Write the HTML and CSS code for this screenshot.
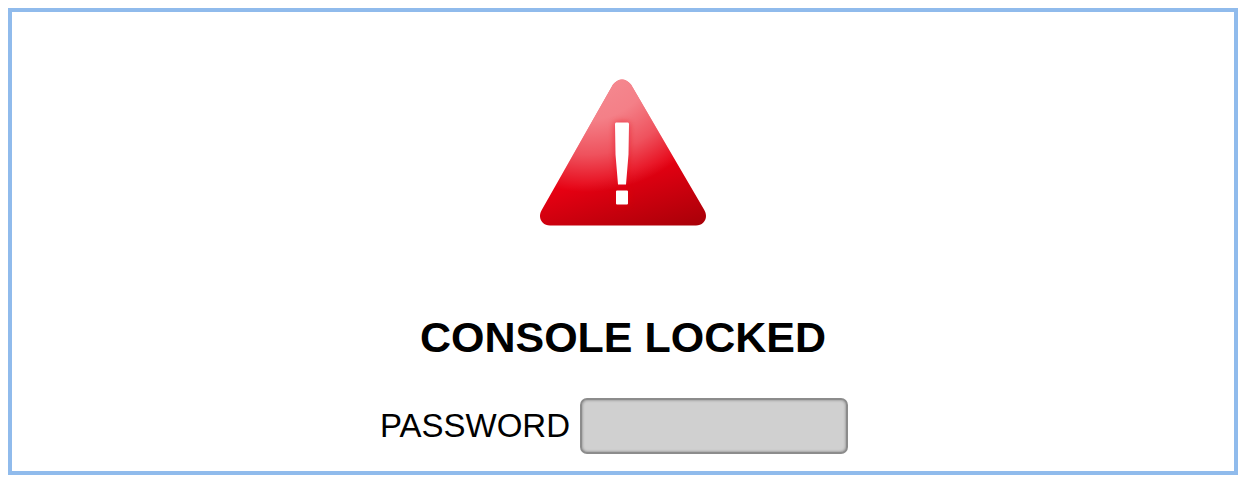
FILE: index.html
```html
<!DOCTYPE html>
<html lang="en">
<head>
<meta charset="utf-8">
<title>Console Locked</title>
<link rel="stylesheet" href="styles.css">
</head>
<body>
<main class="panel">
  <svg class="warning" viewBox="0 0 168 148" role="img" aria-label="Warning">
    <defs>
      <linearGradient id="base" gradientUnits="userSpaceOnUse" x1="84" y1="94" x2="104" y2="164">
        <stop offset="0" stop-color="#e60012"/>
        <stop offset="1" stop-color="#a80008"/>
      </linearGradient>
      <radialGradient id="shine" gradientUnits="userSpaceOnUse" cx="48" cy="-30" r="144">
        <stop offset="0" stop-color="#ffe4e4" stop-opacity=".64"/>
        <stop offset=".5" stop-color="#ffe4e4" stop-opacity=".56"/>
        <stop offset=".74" stop-color="#ffe4e4" stop-opacity=".36"/>
        <stop offset="1" stop-color="#ffe4e4" stop-opacity="0"/>
      </radialGradient>
      <filter id="glow" x="-100%" y="-20%" width="300%" height="140%">
        <feGaussianBlur stdDeviation="3"/>
      </filter>
      <path id="shape" d="M74 6.500Q83-3.500 92 6.500L165 131.500C170 139.500 165 147.500 157 147.500H11C3 147.500-2 139.500 3 131.500Z"/>
      <path id="mark" d="M77 44.500H89Q90 44.500 90 46.500L89.500 76.500L87 106.500H79L76.500 76.500L76 46.500Q76 44.500 77 44.500ZM78 112.500H88Q89 112.500 89 113.500V125.500Q89 126.500 88 126.500H78Q77 126.500 77 125.500V113.500Q77 112.500 78 112.500Z"/>
    </defs>
    <use href="#shape" fill="url(#base)"/>
    <use href="#shape" fill="url(#shine)"/>
    <use href="#mark" fill="#e60012" opacity=".6" filter="url(#glow)"/>
    <use href="#mark" fill="#fff"/>
  </svg>
  <h1 class="title">CONSOLE LOCKED</h1>
  <form class="login">
    <label class="label" for="password">PASSWORD</label>
    <input class="field" id="password" type="password">
  </form>
</main>
</body>
</html>
```
FILE: styles.css
```css
* { box-sizing: border-box; }

body {
  margin: 8px;
  background: #fff;
  color: #000;
  font-family: "Liberation Sans", Arial, sans-serif;
}

.panel {
  display: flex;
  flex-direction: column;
  align-items: center;
  padding: 66px 16px 17px;
  border: 4px solid #90bbec;
  background: #fff;
  box-shadow: 0 0 12px rgba(0, 0, 0, .5);
}

.warning {
  width: 168px;
  height: 148px;
}

.title {
  margin: 86px 0 36px;
  font-size: 43px;
  line-height: 50px;
  font-weight: bold;
}

.login {
  display: flex;
  align-items: center;
  gap: 10px;
  margin-right: 18px;
}

.label {
  font-size: 33px;
  line-height: 40px;
}

.field {
  width: 268px;
  height: 56px;
  padding: 4px 12px;
  border: 2px solid #8c8c8c;
  border-radius: 7px;
  outline: none;
  background: #d0d0d0;
  box-shadow: inset 0 0 3px rgba(0, 0, 0, .4);
  font-family: inherit;
  font-size: 33px;
}
```
